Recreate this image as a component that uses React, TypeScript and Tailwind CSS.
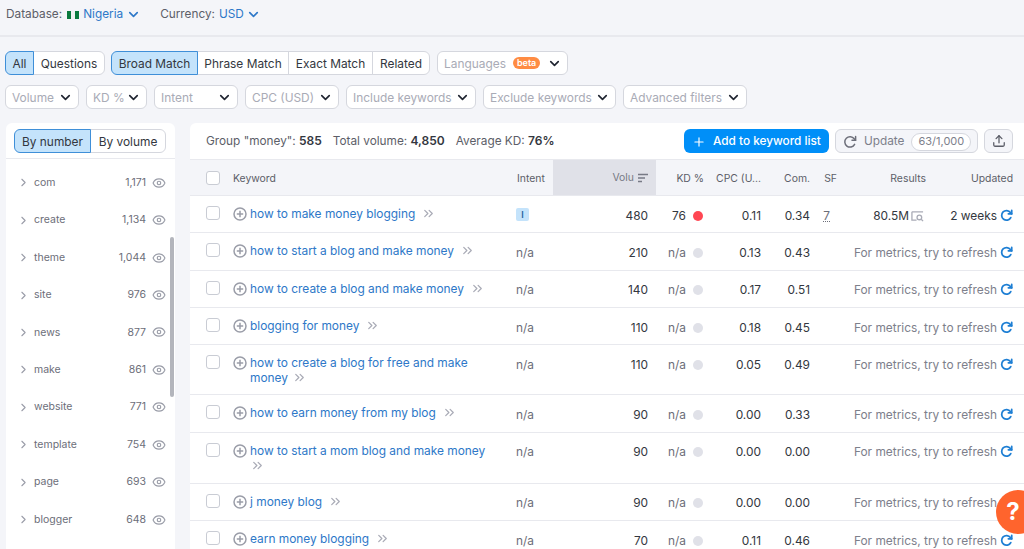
import React from "react";
import { ChevronDown, ChevronRight, Eye, Plus, Upload, ChevronsRight } from "lucide-react";

const Caret = () => <ChevronDown className="w-[15px] h-[15px] text-[#1f2430] shrink-0" strokeWidth={2.6} />;

function Filter({ label, w, children }: { label: string; w: string; children?: React.ReactNode }) {
  return (
    <div className={`${w} h-6 bg-white border border-[#d5d7de] rounded-md flex items-center justify-between pl-[6px] pr-[5px] text-[#a9abb6] text-[11.9px]`}>
      <span className="flex items-center gap-[7px] whitespace-nowrap pt-px">{label}{children}</span>
      <Caret />
    </div>
  );
}

function Seg({ label, active, w, first, last }: { label: string; active?: boolean; w: string; first?: boolean; last?: boolean }) {
  return (
    <div
      className={`${w} h-6 flex items-center justify-center pt-px text-[11.9px] text-[#333740] border ${active ? "bg-[#c4e3fb] border-[#3f8fd8] z-10" : "bg-white border-[#d5d7de] -ml-px"} ${first ? "rounded-l-md" : ""} ${last ? "rounded-r-md" : ""}`}
    >
      {label}
    </div>
  );
}

const groups = [
  ["com", "1,171"], ["create", "1,134"], ["theme", "1,044"], ["site", "976"], ["news", "877"],
  ["make", "861"], ["website", "771"], ["template", "754"], ["page", "693"], ["blogger", "648"],
];

type Row = { kw: string; kw2?: string; h: string; vol: string; cpc: string; com: string; first?: boolean };
const rows: Row[] = [
  { kw: "how to make money blogging", h: "h-[37.3px]", vol: "480", cpc: "0.11", com: "0.34", first: true },
  { kw: "how to start a blog and make money", h: "h-[37.4px]", vol: "210", cpc: "0.13", com: "0.43" },
  { kw: "how to create a blog and make money", h: "h-[37.4px]", vol: "140", cpc: "0.17", com: "0.51" },
  { kw: "blogging for money", h: "h-[37.4px]", vol: "110", cpc: "0.18", com: "0.45" },
  { kw: "how to create a blog for free and make", kw2: "money", h: "h-[50px]", vol: "110", cpc: "0.05", com: "0.49" },
  { kw: "how to earn money from my blog", h: "h-[37.4px]", vol: "90", cpc: "0.00", com: "0.33" },
  { kw: "how to start a mom blog and make money", kw2: "", h: "h-[51px]", vol: "90", cpc: "0.00", com: "0.00" },
  { kw: "j money blog", h: "h-[37.4px]", vol: "90", cpc: "0.00", com: "0.00" },
  { kw: "earn money blogging", h: "h-[37.4px]", vol: "70", cpc: "0.11", com: "0.46" },
];

const Check = () => <div className="w-[14px] h-[14px] bg-white border border-[#c9ccd4] rounded-[3px] shrink-0" />;
const Arrows = () => <ChevronsRight className="w-[15px] h-[15px] text-[#a9abb6] shrink-0" strokeWidth={2} />;

function Refresh({ color, size, sw }: { color: string; size: string; sw: string }) {
  return (
    <svg viewBox="0 0 14 14" className={`${size} shrink-0`} fill="none" stroke={color} strokeWidth={sw} strokeLinecap="round" strokeLinejoin="round">
      <path d="M11.6 9.3A5.2 5.2 0 1 1 11.2 3.8L12.6 5.2" />
      <path d="M12.6 1.6V5.2H9" />
    </svg>
  );
}

function AddIcon() {
  return (
    <svg viewBox="0 0 14 14" className="w-[14px] h-[14px] shrink-0 mr-[3px] mt-[1px]" fill="none" stroke="#9a9da8" strokeWidth="1.5">
      <circle cx="7" cy="7" r="6" />
      <path d="M7 3.8v6.4M3.8 7h6.4" />
    </svg>
  );
}

function TableRow({ r }: { r: Row }) {
  return (
    <div className={`${r.h} flex border-b border-[#e8e9ee] text-[11.9px] text-[#333740] shrink-0`}>
      <div className="w-[43px] pl-[16px] pt-[10px] shrink-0"><Check /></div>
      <div className="w-[284px] shrink-0 pt-[10px] text-[#2e78c8] leading-[15px] pr-1">
        <div className="flex items-start">
          <AddIcon />
          <span className="whitespace-nowrap">{r.kw}</span>
          {r.kw2 === undefined && <span className="ml-[6px]"><Arrows /></span>}
        </div>
        {r.kw2 !== undefined && (
          <div className="flex items-center pl-[17px]">
            {r.kw2 && <span>{r.kw2}</span>}
            <span className={r.kw2 ? "ml-1" : ""}><Arrows /></span>
          </div>
        )}
      </div>
      <div className="w-[50px] shrink-0 pt-[11.5px] text-[#6c6e79] leading-[15px] -ml-px mr-px">
        {r.first ? (
          <span className="w-[13px] h-[13px] bg-[#c4e3fb] rounded-[2px] text-[#1d5f9f] text-[9px] font-semibold flex items-center justify-center">I</span>
        ) : "n/a"}
      </div>
      <div className="w-[81px] shrink-0 pt-[11.5px] text-right leading-[15px]">{r.vol}</div>
      <div className="w-[55px] shrink-0 pt-[11.5px] flex items-start justify-end gap-[7px] leading-[15px]">
        <span className={r.first ? "" : "text-[#6c6e79]"}>{r.first ? "76" : "n/a"}</span>
        <span className={`w-[10px] h-[10px] rounded-full mt-[3px] ${r.first ? "bg-[#ff4753]" : "bg-[#e0e1e8]"}`} />
      </div>
      <div className="w-[58px] shrink-0 pt-[11.5px] text-right leading-[15px]">{r.cpc}</div>
      <div className="w-[49px] shrink-0 pt-[11.5px] text-right leading-[15px]">{r.com}</div>
      {r.first ? (
        <>
          <div className="w-[20px] shrink-0 pt-[11.5px] text-right leading-[15px] text-[#6c6e79]"><span className="underline decoration-dotted">7</span></div>
          <div className="w-[94px] shrink-0 pt-[11.5px] flex justify-end items-start gap-[2px] leading-[15px]">
            80.5M
            <svg viewBox="0 0 14 14" className="w-[13px] h-[13px] mt-[2px]" fill="none" stroke="#a9abb6" strokeWidth="1.4"><path d="M1 2h12M1 2v9h5" /><circle cx="9" cy="8" r="2.5" /><path d="M11 10l2 2" /></svg>
          </div>
          <div className="flex-1 pt-[11.5px] flex justify-end items-start gap-[3px] pr-[11px] leading-[15px]">
            2 weeks<span className="mt-[1px]"><Refresh color="#1e7fd4" size="w-[13px] h-[13px]" sw="1.9" /></span>
          </div>
        </>
      ) : (
        <div className="flex-1 pt-[11.5px] flex justify-end items-start gap-[3px] pr-[11px] leading-[15px] text-[#7d808b] whitespace-nowrap">
          For metrics, try to refresh<span className="mt-[1px]"><Refresh color="#1e7fd4" size="w-[13px] h-[13px]" sw="1.9" /></span>
        </div>
      )}
    </div>
  );
}

export default function App() {
  return (
    <div className="w-[1024px] h-[549px] overflow-hidden relative bg-[#f4f5f9] font-['Inter',sans-serif]">
      <div className="h-[37px] border-b-2 border-[#e8e9ee] flex items-start pt-[6px] pl-[6px] text-[11.8px] leading-[17px] text-[#5c5e68]">
        <span>Database:</span>
        <svg viewBox="0 0 12 8" className="w-[12px] h-[8px] ml-[5px] mt-[5px] mr-[4px]"><rect width="4" height="8" fill="#0a7a3e" /><rect x="4" width="4" height="8" fill="#f2f2f2" /><rect x="8" width="4" height="8" fill="#0a7a3e" /></svg>
        <span className="text-[#2e78c8]">Nigeria</span>
        <ChevronDown className="w-[15px] h-[15px] text-[#2e78c8] ml-[3px] mt-[1px]" strokeWidth={2.6} />
        <span className="ml-[19px]">Currency:</span>
        <span className="text-[#2e78c8] ml-[4px]">USD</span>
        <ChevronDown className="w-[15px] h-[15px] text-[#2e78c8] ml-[2px] mt-[1px]" strokeWidth={2.6} />
      </div>

      <div className="flex pl-[5px] mt-[14px]">
        <div className="flex mr-[6px]">
          <Seg label="All" active first w="w-[29px]" />
          <Seg label="Questions" last w="w-[72px]" />
        </div>
        <div className="flex mr-[7px]">
          <Seg label="Broad Match" active first w="w-[87px]" />
          <Seg label="Phrase Match" w="w-[92px]" />
          <Seg label="Exact Match" w="w-[85px]" />
          <Seg label="Related" last w="w-[58px]" />
        </div>
        <Filter label="Languages" w="w-[131px]">
          <span className="bg-[#ff8c43] text-white text-[9px] font-semibold rounded-full px-[4px] h-[12px] leading-[12px]">beta</span>
        </Filter>
      </div>

      <div className="flex pl-[5px] mt-[10px] gap-[7px]">
        <Filter label="Volume" w="w-[74px]" />
        <Filter label="KD %" w="w-[61px]" />
        <Filter label="Intent" w="w-[84px]" />
        <Filter label="CPC (USD)" w="w-[94px]" />
        <Filter label="Include keywords" w="w-[130px]" />
        <Filter label="Exclude keywords" w="w-[133px]" />
        <Filter label="Advanced filters" w="w-[124px]" />
      </div>

      <div className="flex mt-[14px]">
        <div className="w-[169px] ml-[6px] h-[430px] bg-white rounded-t-md relative shrink-0">
          <div className="h-[36px] border-b border-[#e8e9ee] pl-[8px] pt-[6px] flex">
            <Seg label="By number" active first w="w-[77px]" />
            <Seg label="By volume" last w="w-[76px]" />
          </div>
          <div className="absolute right-[1px] top-[114px] w-[4px] h-[160px] rounded bg-[#b3b5bc]" />
          <div className="pt-[5px]">
            {groups.map(([n, c]) => (
              <div key={n} className="h-[37.45px] flex items-center text-[10.5px] text-[#6c6e79] pl-[11px] pr-[9px]">
                <ChevronRight className="w-[13px] h-[13px] text-[#9a9da8] mr-[4px]" strokeWidth={2} />
                <span>{n}</span>
                <span className="ml-auto">{c}</span>
                <Eye className="w-[14px] h-[14px] text-[#9a9da8] ml-[6px]" strokeWidth={2} />
              </div>
            ))}
          </div>
        </div>

        <div className="flex-1 ml-[15px] bg-white rounded-tl-md flex flex-col min-w-0">
          <div className="h-[36px] flex items-center pl-[16px] pr-[11px] text-[11.8px] text-[#5c5e68] shrink-0">
            <span className="pt-px">Group "money": <b className="text-[#333740] font-semibold text-[12px]">585</b></span>
            <span className="ml-[11px] pt-px">Total volume: <b className="text-[#333740] font-semibold text-[12px]">4,850</b></span>
            <span className="ml-[11px] pt-px">Average KD: <b className="text-[#333740] font-semibold text-[12px]">76%</b></span>
            <div className="ml-auto w-[145px] h-6 rounded-md bg-[#008ff8] text-white flex items-center pl-[8px] pt-px font-medium whitespace-nowrap">
              <Plus className="w-[14px] h-[14px] mr-[7px]" strokeWidth={2} />Add to keyword list
            </div>
            <div className="ml-[6px] w-[143px] h-6 rounded-md bg-[#f4f5f9] border border-[#d5d7de] text-[#7d808b] flex items-center pl-[7px] pt-px">
              <Refresh color="#6c6e79" size="w-[14px] h-[14px] mr-[7px]" sw="1.5" />Update
              <span className="ml-[7px] h-[18px] px-[6px] rounded-full bg-white border border-[#d5d7de] text-[11px] flex items-center">63/1,000</span>
            </div>
            <div className="ml-[6px] w-[29px] h-6 rounded-md bg-[#f4f5f9] border border-[#d5d7de] flex items-center justify-center">
              <Upload className="w-[14px] h-[14px] text-[#5c5e68]" strokeWidth={2.2} />
            </div>
          </div>
          <div className="h-[37px] flex bg-[#f4f5f9] border-y border-[#e8e9ee] text-[10.4px] text-[#5c5e68] items-center shrink-0 leading-[17px] pt-px">
            <div className="w-[43px] pl-[16px] shrink-0"><Check /></div>
            <div className="w-[284px] shrink-0">Keyword</div>
            <div className="w-[36px] shrink-0">Intent</div>
            <div className="w-[103px] -mt-px h-[35px] bg-[#e0e1e8] shrink-0 flex items-center justify-end pr-[7px] text-[#777a85]">
              <span className="mr-[2px]">Volu</span>
              <svg viewBox="0 0 12 10" className="w-[12px] h-[10px] ml-[1px]" fill="none" stroke="#777a85" strokeWidth="1.4"><path d="M1 1.5h10M1 5h7M1 8.5h4" /></svg>
            </div>
            <div className="w-[48px] shrink-0 text-right">KD %</div>
            <div className="w-[58px] shrink-0 text-right pr-[1px] whitespace-nowrap">CPC (U...</div>
            <div className="w-[48px] shrink-0 text-right">Com.</div>
            <div className="w-[27px] shrink-0 text-right">SF</div>
            <div className="w-[89px] shrink-0 text-right">Results</div>
            <div className="flex-1 text-right pr-[11px]">Updated</div>
          </div>
          {rows.map((r) => <TableRow key={r.kw} r={r} />)}
        </div>
      </div>

      <div className="absolute left-[996px] top-[490px] w-[44px] h-[44px] rounded-full bg-[#ff642d] text-white font-bold text-[24px] flex items-center justify-center pr-[10px]">?</div>
    </div>
  );
}
